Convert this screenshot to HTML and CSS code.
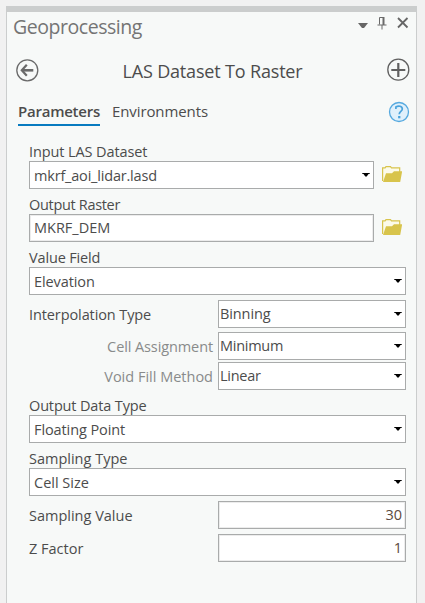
FILE: index.html
```html
<!DOCTYPE html>
<html lang="en">
<head>
<meta charset="utf-8">
<title>Geoprocessing</title>
<link rel="stylesheet" href="styles.css">
</head>
<body>
<svg class="defs" aria-hidden="true">
  <symbol id="caret" viewBox="0 0 8 4"><path d="M.3 0h7.400v1h-1.200L4.700 3.600H3.300L1.500 1H.3z"/></symbol>
  <symbol id="folder" viewBox="0 0 20 16">
    <path d="M.6 15V1.900h2.500L4 .7h4.500l1 1.200h8.200V7" fill="#fcfbea" stroke="#d8c44c" stroke-width="1.200"/>
    <path d="M1 15.900 4 7.300h6l2-2h8.200l-2 10.600z" fill="#d8c44c"/>
  </symbol>
</svg>
<main class="pane">
  <header class="caption">
    <h1>Geoprocessing</h1>
    <svg class="menu" width="10" height="5" viewBox="0 0 10 5"><path d="M0 0h10L6 5H4z" fill="#666"/></svg>
    <svg class="pin" width="10" height="13" viewBox="0 0 10 13"><path d="M2.500 7.500v-7h4v7M6.500 0v7M.5 8h9M5 8v4.500" fill="none" stroke="#6a6a6a"/><path d="M5.500 0h2v8h-2z" fill="#6a6a6a"/></svg>
    <svg class="close" width="12" height="12" viewBox="0 0 12 12"><path d="m1 1 9.500 9.500m0-9.500L1 10.500" stroke="#666" stroke-width="1.800"/></svg>
  </header>
  <div class="toolbar">
    <svg width="24" height="24" viewBox="0 0 24 24" fill="none" stroke="#6a6a6a"><circle cx="12.300" cy="12.300" r="10.500" stroke-width="1.300"/><path d="M18.300 12.300H7.800" stroke-width="2.600"/><path d="m11.800 6.800-5 5.500 5 5.500" stroke-width="2.200"/></svg>
    <h2>LAS Dataset To Raster</h2>
    <svg width="24" height="24" viewBox="0 0 24 24" fill="none" stroke="#606060"><circle cx="12.300" cy="11.700" r="10.500" stroke-width="1.300"/><path d="M5.300 12h14M12.300 5v14" stroke-width="2.200"/></svg>
  </div>
  <nav class="tabs">
    <span class="tab active">Parameters</span>
    <span class="tab">Environments</span>
    <svg class="help" width="22" height="22" viewBox="0 0 22 22"><circle cx="11" cy="11" r="9.500" fill="#e0f0fb" stroke="#55a9df" stroke-width="1.300"/><path d="M7.900 8V5.900C10.500 4.300 14.300 5 14.300 7.900c0 2.500-3.100 2.700-3.100 5.400" fill="none" stroke="#4aa3dc" stroke-width="1.700"/><path d="M10.100 15h2.300v2.300h-2.300z" fill="#4aa3dc"/></svg>
  </nav>
  <form class="form">
    <div class="field">
      <label class="t-input">Input LAS Dataset</label>
      <div class="line"><div class="box"><span class="t-lasd">mkrf_aoi_lidar.lasd</span><svg class="caret"><use href="#caret"/></svg></div><svg class="folder"><use href="#folder"/></svg></div>
    </div>
    <div class="field">
      <label class="t-raster">Output Raster</label>
      <div class="line"><div class="box entry"><span>MKRF_DEM</span></div><svg class="folder"><use href="#folder"/></svg></div>
    </div>
    <div class="field">
      <label class="t-type">Value Field</label>
      <div class="box"><span class="t-input">Elevation</span><svg class="caret"><use href="#caret"/></svg></div>
    </div>
    <div class="row first"><label class="t-input">Interpolation Type</label><div class="box"><span class="t-input">Binning</span><svg class="caret"><use href="#caret"/></svg></div></div>
    <div class="row sub"><label class="t-input">Cell Assignment</label><div class="box"><span class="t-min">Minimum</span><svg class="caret"><use href="#caret"/></svg></div></div>
    <div class="row sub last"><label>Void Fill Method</label><div class="box"><span class="t-min">Linear</span><svg class="caret"><use href="#caret"/></svg></div></div>
    <div class="field">
      <label class="t-type">Output Data Type</label>
      <div class="box"><span class="t-input">Floating Point</span><svg class="caret"><use href="#caret"/></svg></div>
    </div>
    <div class="field">
      <label>Sampling Type</label>
      <div class="box"><span>Cell Size</span><svg class="caret"><use href="#caret"/></svg></div>
    </div>
    <div class="row"><label>Sampling Value</label><div class="box entry number"><span>30</span></div></div>
    <div class="row"><label>Z Factor</label><div class="box entry number"><span>1</span></div></div>
  </form>
</main>
</body>
</html>
```
FILE: styles.css
```css
* { box-sizing: border-box; }
body {
  margin: 0;
  height: 603px;
  padding: 6px 8px 0 6px;
  overflow: hidden;
  background: #f1f1f1;
  color: #4c4c4c;
  font: 14.5px/19px "Open Sans", "Noto Sans", sans-serif;
}
svg { display: block; flex: none; }
.defs { position: absolute; width: 0; height: 0; }
h1, h2 { margin: 0; font-weight: 400; }
.pane {
  height: 597px;
  border: solid #cbcdcd;
  border-width: 6px 1px 0;
  background: #f7f9f8;
}
.caption {
  display: flex;
  height: 44px;
  padding: 0 7px 0 6px;
}
.caption h1 {
  flex: 1;
  color: #747474;
  font-size: 19.5px;
  line-height: 30px;
  letter-spacing: -.45px;
}
.menu { margin: 11px 9px 0 0; }
.pin { margin: 5px 10px 0 0; }
.close { margin-top: 5px; }
.toolbar {
  display: flex;
  justify-content: space-between;
  height: 44px;
  padding: 2px 6px 0 8px;
}
.toolbar h2 {
  font-size: 18px;
  line-height: 26px;
  letter-spacing: -.17px;
}
.tabs {
  display: flex;
  height: 42px;
  padding: 0 6px 0 11px;
  font-size: 15px;
}
.tab {
  height: 26px;
  line-height: 22px;
  margin-right: 12px;
  letter-spacing: -.1px;
}
.active {
  width: 82px;
  border-bottom: 2px solid #087bc0;
  font-weight: 600;
  letter-spacing: -.24px;
}
.help { margin: 1px 0 0 auto; }
.form { padding: 0 10px 0 22px; }
.field { margin-bottom: 6px; }
.field label { display: block; height: 19px; white-space: nowrap; }
.line { display: flex; }
.box {
  display: flex;
  flex: 1;
  height: 28px;
  padding: 0 3px 0 4px;
  justify-content: space-between;
  border: 1px solid #a9abab;
  background: #fff;
  line-height: 28px;
}
.entry { line-height: 26px; box-shadow: inset 0 0 0 1px #ececec; }
.caret { width: 8px; height: 4px; margin-top: 11px; fill: #000; }
.folder { width: 20px; height: 16px; margin: 5px 4px 0 8px; }
.row { display: flex; height: 28px; margin-bottom: 5px; }
.row label { width: 189px; line-height: 30px; }
.row .box { padding-left: 1px; line-height: 26px; }
.field + .row { margin-top: -1px; }
.first { margin-bottom: 4px; }
.sub { margin-bottom: 2px; }
.sub label { padding-right: 5px; text-align: right; color: #898b8b; }
.last { margin-bottom: 6px; }
.row .number { justify-content: flex-end; padding-right: 3px; color: #5c4a40; }
.t-input { letter-spacing: -.1px; }
.t-lasd { letter-spacing: -.19px; }
.t-raster { letter-spacing: -.32px; }
.t-min { letter-spacing: -.28px; }
.t-type { letter-spacing: -.15px; }
```
